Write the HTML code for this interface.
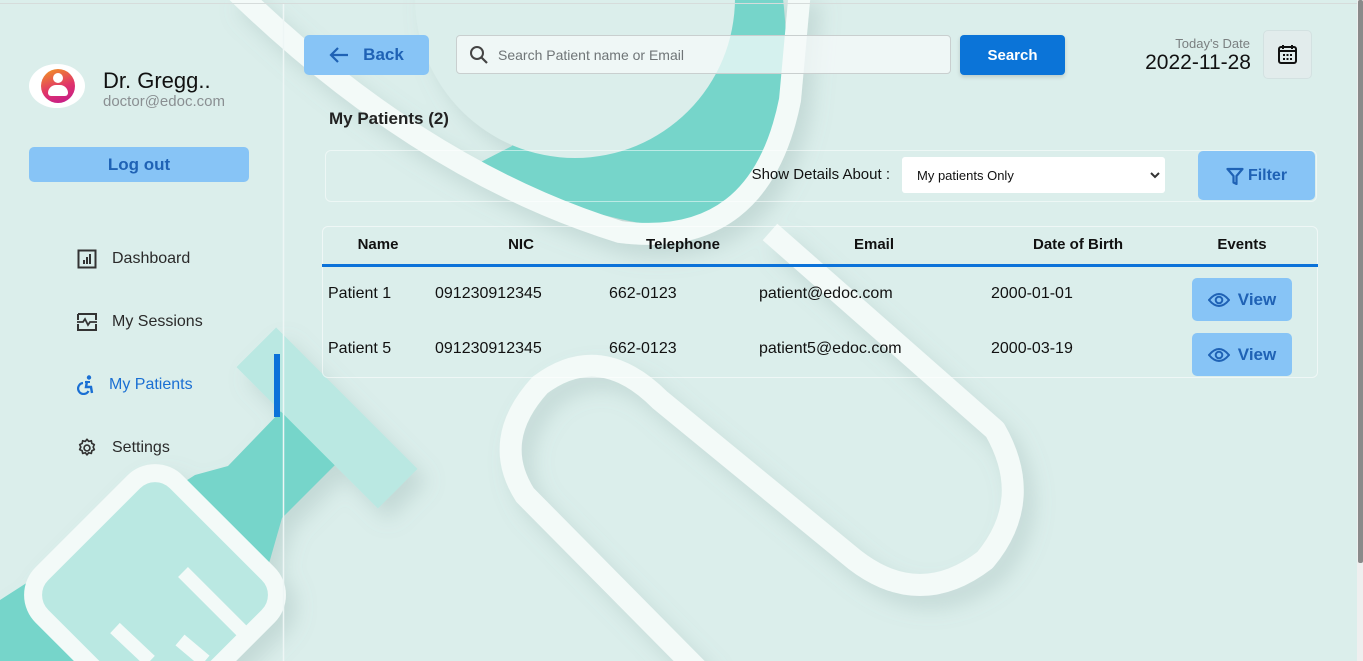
<!DOCTYPE html>
<html><head><meta charset="utf-8">
<style>
*{margin:0;padding:0;box-sizing:border-box}
html,body{width:1363px;height:661px;overflow:hidden}
body{background:#dbeeeb;font-family:"Liberation Sans",sans-serif;position:relative;color:#111}
.abs{position:absolute}
#bg{position:absolute;left:0;top:0}
.btn-l{background:#87c4f6;color:#1f62b5;border-radius:5px;font-weight:bold;display:flex;align-items:center;justify-content:center}
.menu{position:absolute;left:77px;display:flex;align-items:center;font-size:16px;color:#2a2a2a}
.menu svg{margin-right:15px}
.th{position:absolute;top:236px;font-size:15px;font-weight:bold;transform:translateX(-50%)}
.td{position:absolute;font-size:16px;color:#111}
</style></head><body>
<svg id="bg" width="1363" height="661" viewBox="0 0 1363 661">
  <defs><filter id="sh" x="-20%" y="-20%" width="140%" height="140%"><feDropShadow dx="10" dy="12" stdDeviation="10" flood-color="#7a9a96" flood-opacity="0.25"/></filter></defs>
  <g filter="url(#sh)">
  <path d="M475 165 L512 146 L600 -10 L782 -10 Q800 130 740 200 Q700 235 651 225 Q560 210 475 165 Z" fill="#76d5ca"/>
  <circle cx="575" cy="-2" r="160" fill="#dbeeeb"/>
  <path d="M235 -10 Q420 170 620 232 Q760 250 790 100 L800 -10" fill="none" stroke="#f3faf8" stroke-width="22"/>
  <path d="M700 672 L525 495 Q490 440 540 385 Q600 340 660 400 L855 560 Q920 610 985 560 Q1035 500 995 430 L770 232" fill="none" stroke="#f3faf8" stroke-width="22" stroke-linejoin="round"/>
  </g>
  <g filter="url(#sh)">
  <polygon points="195,475 228,466 282,410 338,462 282,518 270,560 230,661 0,661 0,600" fill="#76d5ca"/>
  <rect x="-28" y="-100" width="56" height="200" fill="#bae8e2" transform="translate(327,418) rotate(-45)"/>
  <rect x="-95" y="-95" width="190" height="190" rx="30" fill="#bae8e2" stroke="#f3faf8" stroke-width="18" transform="translate(155,595) rotate(45)"/>
  <line x1="183" y1="572" x2="248" y2="637" stroke="#f3faf8" stroke-width="14"/>
  <line x1="115" y1="628" x2="150" y2="661" stroke="#f3faf8" stroke-width="14"/>
  <line x1="180" y1="640" x2="205" y2="661" stroke="#f3faf8" stroke-width="14"/>
  </g>
  <line x1="0" y1="3.5" x2="1357" y2="3.5" stroke="#d6dcdb" stroke-width="1"/>
  <line x1="283.5" y1="4" x2="283.5" y2="661" stroke="#eef6f5" stroke-width="1.5"/>
  <rect x="274" y="354" width="6" height="63" fill="#0b72d9"/>
  <rect x="1357" y="0" width="6" height="661" fill="#efefef"/>
  <rect x="1358" y="0" width="5" height="563" rx="2" fill="#8a8a8a"/>
</svg>

<div class="abs" style="left:29px;top:64px;width:56px;height:44px;border-radius:50%;background:#fff"></div>
<div class="abs" style="left:41px;top:69px;width:34px;height:34px;border-radius:50%;background:linear-gradient(160deg,#f39a1e,#e0346a 55%,#c0188f)"></div>
<div class="abs" style="left:53px;top:73px;width:10px;height:10px;border-radius:50%;background:#fff"></div>
<div class="abs" style="left:48px;top:85px;width:20px;height:11px;border-radius:8px 8px 3px 3px;background:#fff"></div>
<div class="abs" style="left:103px;top:68px;font-size:22px;color:#111">Dr. Gregg..</div>
<div class="abs" style="left:103px;top:93px;font-size:15px;color:#8a8f92">doctor@edoc.com</div>
<div class="abs btn-l" style="left:29px;top:147px;width:220px;height:35px;font-size:17px;font-weight:600">Log out</div>

<div class="menu" style="top:249px"><svg width="20" height="20" viewBox="0 0 20 20"><rect x="1.5" y="1.5" width="17" height="17" fill="none" stroke="#333" stroke-width="2"/><rect x="6" y="11" width="2" height="4" fill="#333"/><rect x="9" y="8" width="2" height="7" fill="#333"/><rect x="12" y="5" width="2" height="10" fill="#333"/></svg>Dashboard</div>
<div class="menu" style="top:312px"><svg width="20" height="20" viewBox="0 0 20 20"><path d="M1 2h18v6M1 2v6M1 12v6h18v-6" fill="none" stroke="#333" stroke-width="2"/><path d="M0 10h6l2-3 3 6 2-3h7" fill="none" stroke="#333" stroke-width="1.8"/></svg>My Sessions</div>
<div class="menu" style="top:375px;color:#1a6fd3;left:77px"><svg width="18" height="20" viewBox="0 0 18 20" style="margin-right:14px"><circle cx="12" cy="2.5" r="2.2" fill="#1a6fd3"/><path d="M6 8 A5.5 5.5 0 1 0 11.5 16" fill="none" stroke="#1a6fd3" stroke-width="2.2"/><path d="M10 6 L9 12 H14 L15 18" fill="none" stroke="#1a6fd3" stroke-width="2.4"/><path d="M8 7 L13 7" stroke="#1a6fd3" stroke-width="2"/></svg>My Patients</div>
<div class="menu" style="top:438px"><svg width="20" height="20" viewBox="0 0 24 24"><path d="M12 1.5l2 2.6 3.2-.8.6 3.2 3 1.4-1.4 3 1.4 3-3 1.4-.6 3.2-3.2-.8-2 2.6-2-2.6-3.2.8-.6-3.2-3-1.4 1.4-3-1.4-3 3-1.4.6-3.2 3.2.8z" fill="none" stroke="#333" stroke-width="2" stroke-linejoin="round"/><circle cx="12" cy="12" r="3.5" fill="none" stroke="#333" stroke-width="2"/></svg>Settings</div>

<div class="abs btn-l" style="left:304px;top:35px;width:125px;height:40px;font-size:17px;font-weight:600"><svg width="20" height="16" viewBox="0 0 20 16" style="margin-right:14px"><path d="M9 1L2 8l7 7M2 8h17" fill="none" stroke="#1f62b5" stroke-width="2.2"/></svg>Back</div>
<div class="abs" style="left:456px;top:35px;width:495px;height:39px;border:1px solid #c9cfcf;border-radius:4px;background:rgba(245,250,249,0.75)"></div>
<svg class="abs" style="left:469px;top:45px" width="20" height="20" viewBox="0 0 20 20"><circle cx="8" cy="8" r="6" fill="none" stroke="#444" stroke-width="2"/><path d="M12.5 12.5L18 18" stroke="#444" stroke-width="2.2"/></svg>
<div class="abs" style="left:498px;top:47px;font-size:14px;color:#6f7577">Search Patient name or Email</div>
<div class="abs" style="left:960px;top:35px;width:105px;height:40px;background:#0b74d8;border-radius:4px;color:#fff;font-size:15px;font-weight:bold;display:flex;align-items:center;justify-content:center;box-shadow:0 2px 4px rgba(0,0,0,.15)">Search</div>
<div class="abs" style="left:1100px;width:150px;top:36px;text-align:right;font-size:13px;color:#7a7f80">Today's Date</div>
<div class="abs" style="left:1100px;width:151px;top:51px;text-align:right;font-size:21px;color:#111">2022-11-28</div>
<div class="abs" style="left:1263px;top:30px;width:49px;height:49px;background:#e2ecec;border:1px solid #d3e1e1;border-radius:5px"></div>
<svg class="abs" style="left:1278px;top:44px" width="19" height="20" viewBox="0 0 19 20"><rect x="1" y="3" width="17" height="16" rx="2" fill="none" stroke="#111" stroke-width="2"/><path d="M1 7h17M5 1v4M14 1v4" stroke="#111" stroke-width="2"/><g fill="#111"><rect x="5" y="10" width="2" height="2"/><rect x="8.5" y="10" width="2" height="2"/><rect x="12" y="10" width="2" height="2"/><rect x="5" y="14" width="2" height="2"/><rect x="8.5" y="14" width="2" height="2"/><rect x="12" y="14" width="2" height="2"/></g></svg>

<div class="abs" style="left:329px;top:109px;font-size:17px;color:#222;font-weight:600">My Patients (2)</div>

<div class="abs" style="left:325px;top:150px;width:992px;height:52px;border:1px solid rgba(255,255,255,.5);border-radius:6px"></div>
<div class="abs" style="left:690px;width:200px;top:166px;text-align:right;font-size:15px;color:#111">Show Details About :</div>
<div class="abs" style="left:902px;top:157px;width:263px;height:36px;background:#fff;border-radius:3px;font-size:13px;color:#111;padding:11px 0 0 15px">My patients Only</div>
<svg class="abs" style="left:1150px;top:171px" width="10" height="8" viewBox="0 0 10 8"><path d="M1 2l4 4 4-4" fill="none" stroke="#333" stroke-width="2"/></svg>
<div class="abs btn-l" style="left:1198px;top:151px;width:117px;height:49px;font-size:16px"><svg width="18" height="18" viewBox="0 0 18 18" style="margin-right:4px"><path d="M1.5 2h15l-6 7v8l-3-1.5V9z" fill="none" stroke="#1f62b5" stroke-width="2.2" stroke-linejoin="round"/></svg>Filter</div>

<div class="abs" style="left:322px;top:226px;width:996px;height:152px;border:1px solid rgba(255,255,255,.55);border-radius:6px"></div>
<div class="th" style="left:378px">Name</div>
<div class="th" style="left:521px">NIC</div>
<div class="th" style="left:683px">Telephone</div>
<div class="th" style="left:874px">Email</div>
<div class="th" style="left:1078px">Date of Birth</div>
<div class="th" style="left:1242px">Events</div>
<div class="abs" style="left:322px;top:264px;width:996px;height:3px;background:#0b72d9"></div>

<div class="td" style="left:328px;top:285px">Patient 1</div>
<div class="td" style="left:435px;top:285px">091230912345</div>
<div class="td" style="left:609px;top:285px">662-0123</div>
<div class="td" style="left:759px;top:285px">patient@edoc.com</div>
<div class="td" style="left:991px;top:285px">2000-01-01</div>
<div class="td" style="left:328px;top:340px">Patient 5</div>
<div class="td" style="left:435px;top:340px">091230912345</div>
<div class="td" style="left:609px;top:340px">662-0123</div>
<div class="td" style="left:759px;top:340px">patient5@edoc.com</div>
<div class="td" style="left:991px;top:340px">2000-03-19</div>

<div class="abs btn-l" style="left:1192px;top:278px;width:100px;height:43px;font-size:17px"><svg width="22" height="16" viewBox="0 0 22 16" style="margin-right:8px"><path d="M1 8Q11 -4 21 8Q11 20 1 8Z" fill="none" stroke="#1f62b5" stroke-width="2"/><circle cx="11" cy="8" r="3.3" fill="none" stroke="#1f62b5" stroke-width="2"/></svg>View</div>
<div class="abs btn-l" style="left:1192px;top:333px;width:100px;height:43px;font-size:17px"><svg width="22" height="16" viewBox="0 0 22 16" style="margin-right:8px"><path d="M1 8Q11 -4 21 8Q11 20 1 8Z" fill="none" stroke="#1f62b5" stroke-width="2"/><circle cx="11" cy="8" r="3.3" fill="none" stroke="#1f62b5" stroke-width="2"/></svg>View</div>
</body></html>
